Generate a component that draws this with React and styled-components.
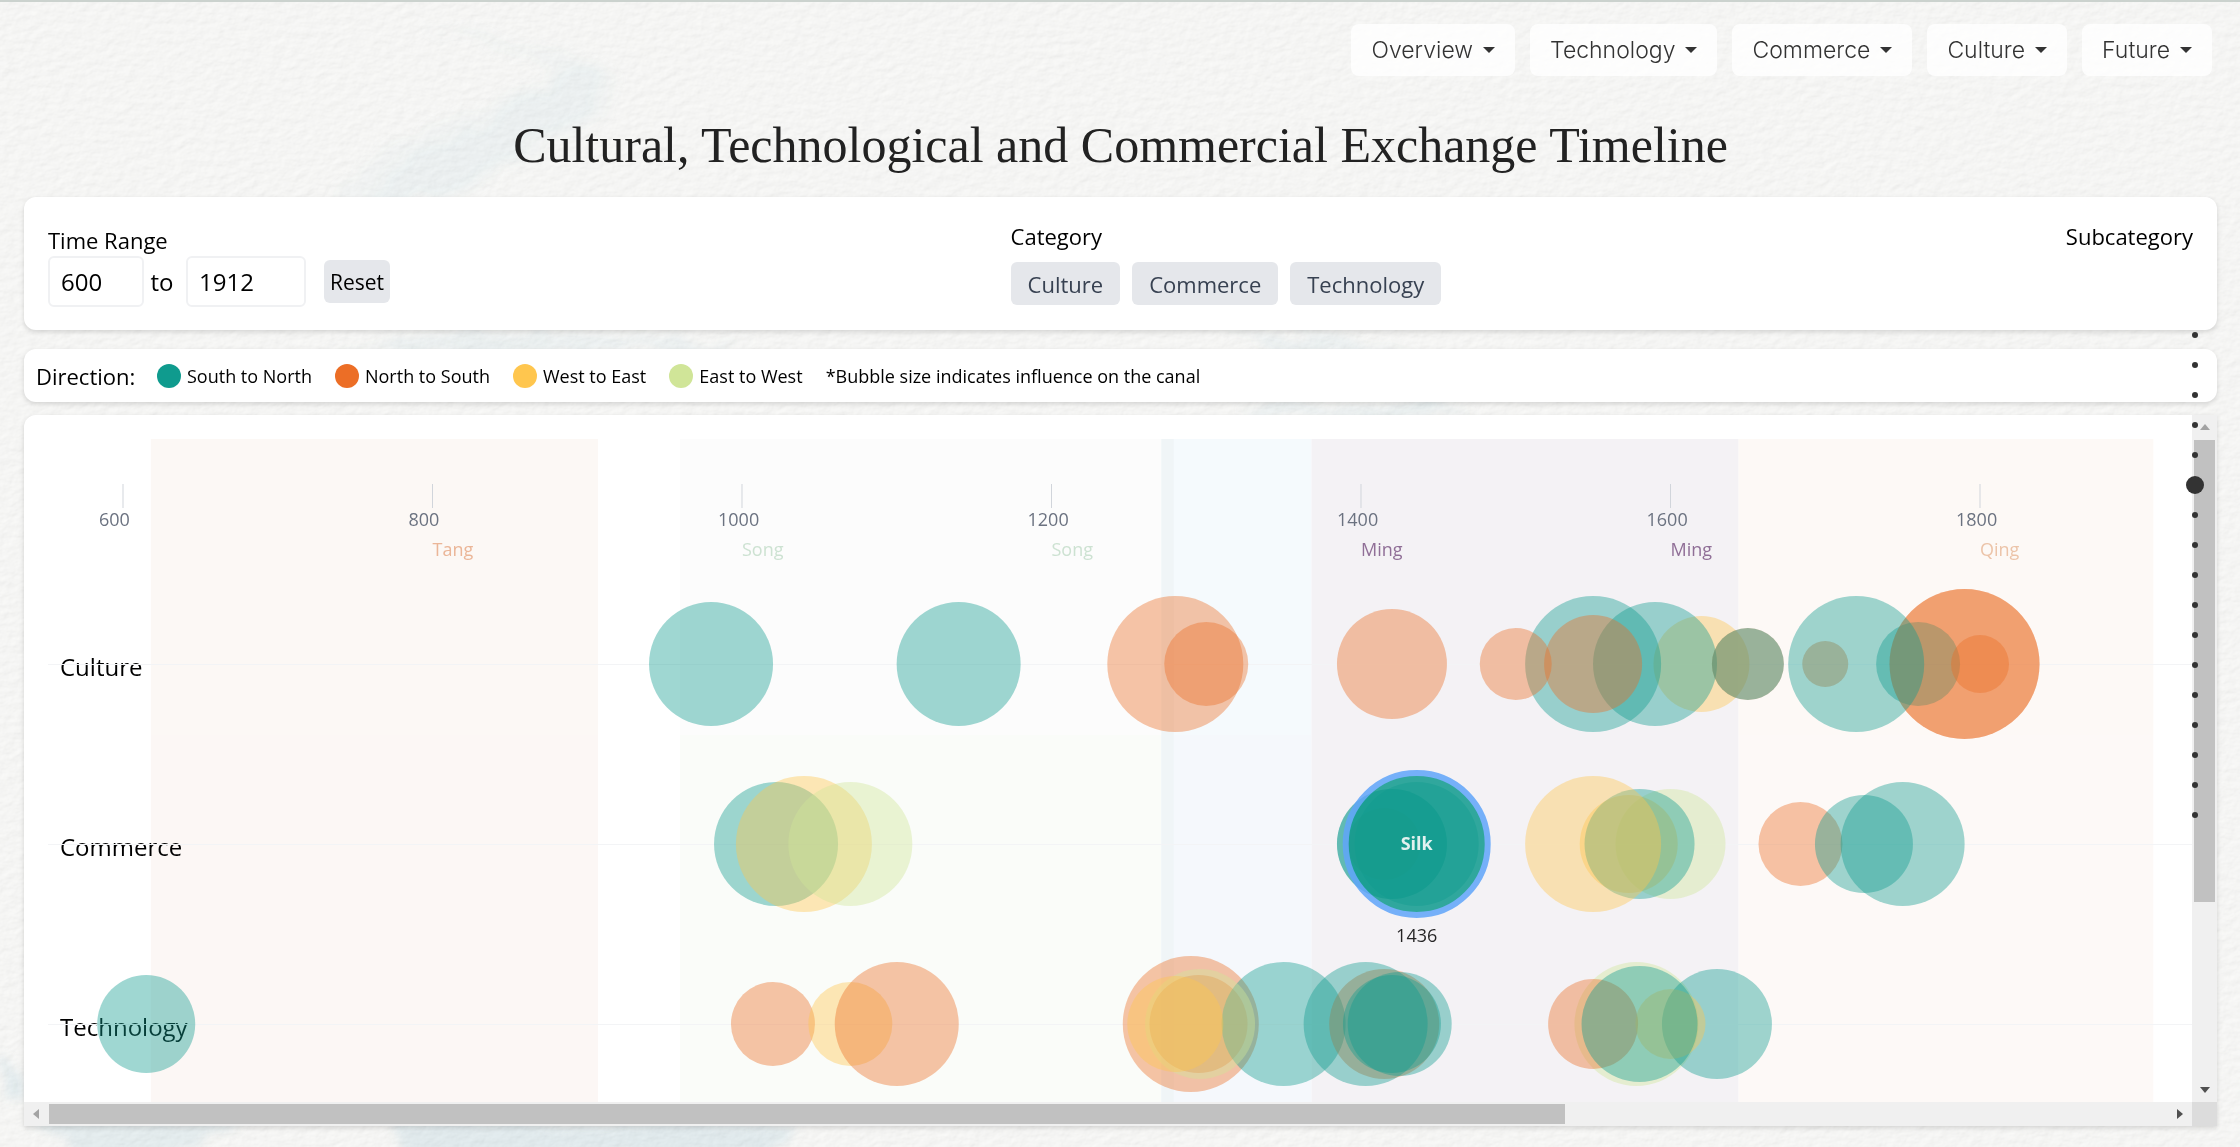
import React from "react";
import styled, { createGlobalStyle } from "styled-components";

const sans = `"Open Sans", "Noto Sans", sans-serif`;

const GlobalStyle = createGlobalStyle`
  *, *::before, *::after { box-sizing: border-box; }
  html { background: #f5f5f3; }
  body { margin: 0; font-family: ${sans}; color: #000; overflow: hidden; }
  button, input { font-family: inherit; margin: 0; }
`;

/* ---------- data ---------- */

const COLORS = {
  sn: "#0f9b8e",
  ns: "#ec6e26",
  we: "#ffc64e",
  ew: "#d0e598",
};

const DIRECTIONS = [
  { id: "sn", label: "South to North" },
  { id: "ns", label: "North to South" },
  { id: "we", label: "West to East" },
  { id: "ew", label: "East to West" },
];

const MENUS = ["Overview", "Technology", "Commerce", "Culture", "Future"];
const CATEGORIES = ["Culture", "Commerce", "Technology"];

const DYNASTIES = [
  { from: 618, to: 907, upper: "#fcf8f5", lower: "#fcf7f5" },
  { from: 960, to: 1279, upper: "#fcfcfc", lower: "#fafcf9" },
  { from: 1271, to: 1368, upper: "#f5fafd", lower: "#f5f8fc" },
  { from: 1368, to: 1644, upper: "#f4f2f5", lower: "#f4f2f5" },
  { from: 1644, to: 1912, upper: "#fdf9f6", lower: "#fdf9f7" },
];

const TICKS = [
  { year: 600 },
  { year: 800, name: "Tang", color: "#ebb698" },
  { year: 1000, name: "Song", color: "#cde2d2" },
  { year: 1200, name: "Song", color: "#cde2d2" },
  { year: 1400, name: "Ming", color: "#906f97" },
  { year: 1600, name: "Ming", color: "#906f97" },
  { year: 1800, name: "Qing", color: "#ecc4a9" },
];

/* [year, radius, direction], listed from back to front */
const ROWS = [
  {
    name: "Culture",
    cy: 249,
    bubbles: [
      [980, 62, "sn"], [1140, 62, "sn"], [1280, 68, "ns"], [1300, 42, "ns"],
      [1420, 55, "ns"], [1620, 48, "we"], [1550, 68, "sn"], [1590, 62, "sn"],
      [1500, 36, "ns"], [1550, 49, "ns"], [1650, 36, "ns"], [1650, 36, "sn"],
      [1700, 23, "ns"], [1790, 75, "ns"], [1760, 42, "sn"], [1790, 75, "ns"],
      [1720, 68, "sn"], [1800, 29, "ns"],
    ],
  },
  {
    name: "Commerce",
    cy: 429,
    bubbles: [
      [1022, 62, "sn"], [1040, 68, "we"], [1070, 62, "ew"],
      [1415, 36, "ns"], [1420, 55, "sn"], [1420, 55, "sn"], [1436, 62, "sn"],
      [1600, 55, "ew"], [1573, 49, "we"], [1580, 55, "sn"], [1550, 68, "we"],
      [1684, 42, "ns"], [1725, 49, "sn"], [1750, 62, "sn"],
    ],
  },
  {
    name: "Technology",
    cy: 609,
    bubbles: [
      [615, 49, "sn"],
      [1020, 42, "ns"], [1070, 42, "we"], [1100, 62, "ns"],
      [1290, 68, "ns"], [1295, 49, "ns"], [1350, 62, "sn"], [1296, 55, "ew"], [1280, 48, "we"],
      [1415, 55, "ns"], [1403, 62, "sn"], [1420, 49, "sn"], [1425, 52, "sn"],
      [1578, 62, "ew"], [1550, 45, "ns"], [1630, 55, "sn"], [1600, 35, "we"], [1580, 58, "sn"],
    ],
  },
];

const SELECTED = { name: "Silk", year: 1436, cy: 429, r: 71 };

const xOf = (year) => 99 + (year - 600) * 1.5475;

/* ---------- page ---------- */

const Page = styled.div`
  position: relative;
  min-height: 100vh;
  display: flex;
  flex-direction: column;
  padding: 22px 23px 21px 24px;
  border-top: 2px solid #cbd2ce;
`;

const Backdrop = styled.svg`
  position: fixed;
  inset: 0;
  width: 100%;
  height: 100%;
  z-index: -1;
`;

const Nav = styled.nav`
  display: flex;
  justify-content: flex-end;
  gap: 15px;
  padding-right: 5px;
`;

const MenuButton = styled.button`
  display: flex;
  align-items: center;
  gap: 10px;
  height: 52px;
  padding: 0 20px;
  border: 0;
  border-radius: 8px;
  background: rgba(255, 255, 255, 0.8);
  color: #333;
  font-family: Inter, sans-serif;
  font-size: 23px;
  font-weight: 300;
`;

const Caret = styled.span`
  border: 6px solid transparent;
  border-top-color: #333;
  border-bottom: 0;
`;

const Title = styled.h1`
  margin: 39px 0 22px;
  text-align: center;
  font-family: "Liberation Serif", serif;
  font-size: 50px;
  line-height: 60px;
  font-weight: 400;
  color: #222;
`;

const Card = styled.section`
  display: flex;
  background: #fff;
  border-radius: 12px;
  box-shadow: 0 2px 5px rgba(0, 0, 0, 0.14);
`;

const Filters = styled(Card)`
  justify-content: space-between;
  align-items: flex-start;
  padding: 24px;
  height: 133px;
`;

const Group = styled.div`
  display: flex;
  flex-direction: column;
  gap: ${(p) => p.$gap}px;
  padding-top: ${(p) => p.$top || 0}px;
  width: ${(p) => (p.$width ? `${p.$width}px` : "auto")};
`;

const GroupLabel = styled.div`
  font-size: 22px;
  line-height: ${(p) => p.$line || 30}px;
`;

const RangeRow = styled.div`
  display: flex;
  align-items: center;
  font-size: 24px;
`;

const YearInput = styled.input`
  flex: none;
  width: ${(p) => p.$width}px;
  height: 51px;
  padding: 0 11px;
  border: 2px solid #f0f1f3;
  border-radius: 6px;
  background: #fff;
  font-size: 24px;
  color: #000;
`;

const To = styled.span`
  flex: none;
  width: 42px;
  padding-right: 6px;
  text-align: center;
`;

const GreyButton = styled.button`
  flex: none;
  height: 43px;
  padding: 0 ${(p) => p.$pad}px;
  margin-left: ${(p) => p.$indent || 0}px;
  border: 0;
  border-radius: 6px;
  background: #e5e7eb;
  color: ${(p) => p.$color};
  font-size: ${(p) => p.$size}px;
`;

const ButtonRow = styled.div`
  display: flex;
  gap: 12px;
`;

const Legend = styled(Card)`
  align-items: center;
  height: 53px;
  margin: 19px 0 13px;
  padding: 0 12px;
  font-size: 18px;
`;

const LegendTitle = styled.span`
  width: 121px;
  font-size: 22px;
`;

const LegendItem = styled.span`
  display: flex;
  align-items: center;
  gap: 6px;
  margin-right: 23px;
`;

const Swatch = styled.span`
  width: 24px;
  height: 24px;
  border-radius: 50%;
  background: ${(p) => p.$color};
`;

/* ---------- chart panel ---------- */

const Panel = styled.section`
  flex: 1;
  min-height: 0;
  display: grid;
  grid-template-columns: minmax(0, 1fr) 25px;
  grid-template-rows: minmax(0, 1fr) 24px;
  background: #fff;
  border-radius: 12px 0 0 0;
  box-shadow: 0 2px 5px rgba(0, 0, 0, 0.14);
`;

const Viewport = styled.div`
  height: 687px;
  overflow: hidden;
`;

const Chart = styled.svg`
  display: block;
  font-family: ${sans};
`;

const ScrollBar = styled.div`
  display: flex;
  flex-direction: ${(p) => (p.$vertical ? "column" : "row")};
  background: #f0f0f0;
`;

const ScrollArrow = styled.span`
  flex: 0 0 25px;
  display: grid;
  place-items: center;
`;

const Track = styled.div`
  flex: 1;
  padding: ${(p) => (p.$vertical ? "0 2px" : "2px 0")};
`;

const Thumb = styled.div`
  width: ${(p) => (p.$vertical ? "100%" : "71.6%")};
  height: ${(p) => (p.$vertical ? "72.5%" : "100%")};
  background: #c1c1c1;
`;

const Corner = styled.div`
  background: #dcdcdc;
`;

const DotNav = styled.nav`
  position: fixed;
  top: 320px;
  right: 30px;
  display: flex;
  flex-direction: column;
`;

const DotLink = styled.a`
  display: grid;
  place-items: center;
  width: 30px;
  height: 30px;
  &::before {
    content: "";
    width: ${(p) => (p.$active ? 18 : 6)}px;
    height: ${(p) => (p.$active ? 18 : 6)}px;
    border-radius: 50%;
    background: #333;
  }
`;

const ARROWS = {
  up: "1,8 6,2 11,8",
  down: "1,3 6,9 11,3",
  left: "8,1 2,6 8,11",
  right: "3,1 9,6 3,11",
};

function Arrow({ dir, color }) {
  return (
    <ScrollArrow>
      <svg width="12" height="12" aria-hidden="true">
        <polygon points={ARROWS[dir]} fill={color} />
      </svg>
    </ScrollArrow>
  );
}

function PaperBackdrop() {
  return (
    <Backdrop viewBox="0 0 2240 1147" preserveAspectRatio="none" aria-hidden="true">
      <defs>
        <filter id="paper" x="0" y="0" width="100%" height="100%">
          <feTurbulence type="fractalNoise" baseFrequency="0.09 0.14" numOctaves="4" seed="8" />
          <feDiffuseLighting lightingColor="#f7f7f6" surfaceScale="0.8" diffuseConstant="1.13">
            <feDistantLight azimuth="225" elevation="60" />
          </feDiffuseLighting>
        </filter>
        <filter id="wash" x="-20%" y="-20%" width="140%" height="140%">
          <feTurbulence type="fractalNoise" baseFrequency="0.02 0.03" numOctaves="3" seed="3" result="noise" />
          <feDisplacementMap in="SourceGraphic" in2="noise" scale="40" xChannelSelector="R" yChannelSelector="G" />
          <feGaussianBlur stdDeviation="5" />
        </filter>
      </defs>
      <rect width="2240" height="1147" fill="#f5f5f3" />
      <g filter="url(#wash)" fill="#cfe0e5">
        <path opacity="0.2" d="M420 25 C520 40 600 50 620 85 C610 130 500 160 440 205 L330 205 C360 150 480 110 550 75 C560 55 480 45 420 25Z" />
        <path opacity="0.3" d="M600 65 C610 130 490 150 430 205 L360 205 C390 150 520 120 570 65Z" />
        <path opacity="0.5" d="M330 350 C480 325 600 335 760 345 L700 352 L420 356Z" />
        <path opacity="0.5" d="M1220 330 C1300 330 1360 340 1420 352 L1300 352Z" />
        <path opacity="0.6" d="M1240 405 L1480 405 L1420 418 L1250 418Z" />
        <path opacity="0.9" d="M0 1060 C20 1070 24 1090 24 1105 L0 1100Z" />
        <path opacity="0.8" d="M40 1120 L240 1120 L180 1160 L70 1160Z" />
        <path opacity="0.9" d="M390 1120 L800 1120 L770 1160 L410 1160Z" />
      </g>
      <rect width="2240" height="1147" filter="url(#paper)" opacity="0.4" />
    </Backdrop>
  );
}

function Timeline() {
  const sx = xOf(SELECTED.year);
  return (
    <Chart width="3000" height="900" role="img" aria-label="Exchange timeline">
      {DYNASTIES.map((d) => (
        <g key={d.from}>
          <rect x={xOf(d.from)} y="24" width={xOf(d.to) - xOf(d.from)} height="296" fill={d.upper} />
          <rect x={xOf(d.from)} y="320" width={xOf(d.to) - xOf(d.from)} height="580" fill={d.lower} />
        </g>
      ))}
      <rect x={xOf(1271)} y="24" width={xOf(1279) - xOf(1271)} height="876" fill="#f0f5f7" />
      {TICKS.map((t) => (
        <g key={t.year} fontSize="18">
          <line x1={xOf(t.year)} x2={xOf(t.year)} y1="69" y2="93" stroke="#d1d5db" strokeWidth="1" />
          <text x={xOf(t.year) - 24} y="111" fill="#6b7280">{t.year}</text>
          <text x={xOf(t.year)} y="141" fill={t.color}>{t.name}</text>
        </g>
      ))}
      {ROWS.map((row) => (
        <g key={row.name}>
          <text x="36" y={row.cy + 12} fontSize="24">{row.name}</text>
          <rect x="24" y={row.cy} width="2976" height="1" fill="#f3f4f6" />
          {row.bubbles.map(([year, r, dir], i) => (
            <circle key={i} cx={xOf(year)} cy={row.cy} r={r} fill={COLORS[dir]} opacity="0.4" />
          ))}
        </g>
      ))}
      <g opacity="0.85" textAnchor="middle">
        <circle cx={sx} cy={SELECTED.cy} r={SELECTED.r} fill={COLORS.sn} stroke="#60a5fa" strokeWidth="6" />
        <text x={sx} y={SELECTED.cy + 6} fontSize="18" fontWeight="700" fill="#fff">{SELECTED.name}</text>
        <text x={sx} y={SELECTED.cy + 98} fontSize="18" fill="#000">{SELECTED.year}</text>
      </g>
    </Chart>
  );
}

export default function App() {
  return (
    <>
      <GlobalStyle />
      <PaperBackdrop />
      <Page>
        <Nav>
          {MENUS.map((m) => (
            <MenuButton key={m} type="button">
              {m}
              <Caret />
            </MenuButton>
          ))}
        </Nav>
        <Title>Cultural, Technological and Commercial Exchange Timeline</Title>

        <Filters>
          <Group $gap={0} $top={3} $width={338}>
            <GroupLabel as="label" htmlFor="from" $line={32}>Time Range</GroupLabel>
            <RangeRow>
              <YearInput id="from" $width={96} defaultValue="600" />
              <To>to</To>
              <YearInput aria-label="End year" $width={120} defaultValue="1912" />
              <GreyButton type="button" $pad={6} $indent={18} $size={21} $color="#000">Reset</GreyButton>
            </RangeRow>
          </Group>
          <Group $gap={11}>
            <GroupLabel>Category</GroupLabel>
            <ButtonRow>
              {CATEGORIES.map((c) => (
                <GreyButton key={c} type="button" $pad={17} $size={22} $color="#374151">{c}</GreyButton>
              ))}
            </ButtonRow>
          </Group>
          <Group $gap={11}>
            <GroupLabel>Subcategory</GroupLabel>
          </Group>
        </Filters>

        <Legend>
          <LegendTitle>Direction:</LegendTitle>
          {DIRECTIONS.map((d) => (
            <LegendItem key={d.id}>
              <Swatch $color={COLORS[d.id]} />
              {d.label}
            </LegendItem>
          ))}
          <span>*Bubble size indicates influence on the canal</span>
        </Legend>

        <Panel>
          <Viewport>
            <Timeline />
          </Viewport>
          <ScrollBar $vertical>
            <Arrow dir="up" color="#a3a3a3" />
            <Track $vertical><Thumb $vertical /></Track>
            <Arrow dir="down" color="#505050" />
          </ScrollBar>
          <ScrollBar>
            <Arrow dir="left" color="#a3a3a3" />
            <Track><Thumb /></Track>
            <Arrow dir="right" color="#505050" />
          </ScrollBar>
          <Corner />
        </Panel>
      </Page>

      <DotNav aria-label="Sections">
        {Array.from({ length: 17 }, (_, i) => (
          <DotLink key={i} href={`#section-${i + 1}`} aria-label={`Section ${i + 1}`} $active={i === 5} />
        ))}
      </DotNav>
    </>
  );
}
